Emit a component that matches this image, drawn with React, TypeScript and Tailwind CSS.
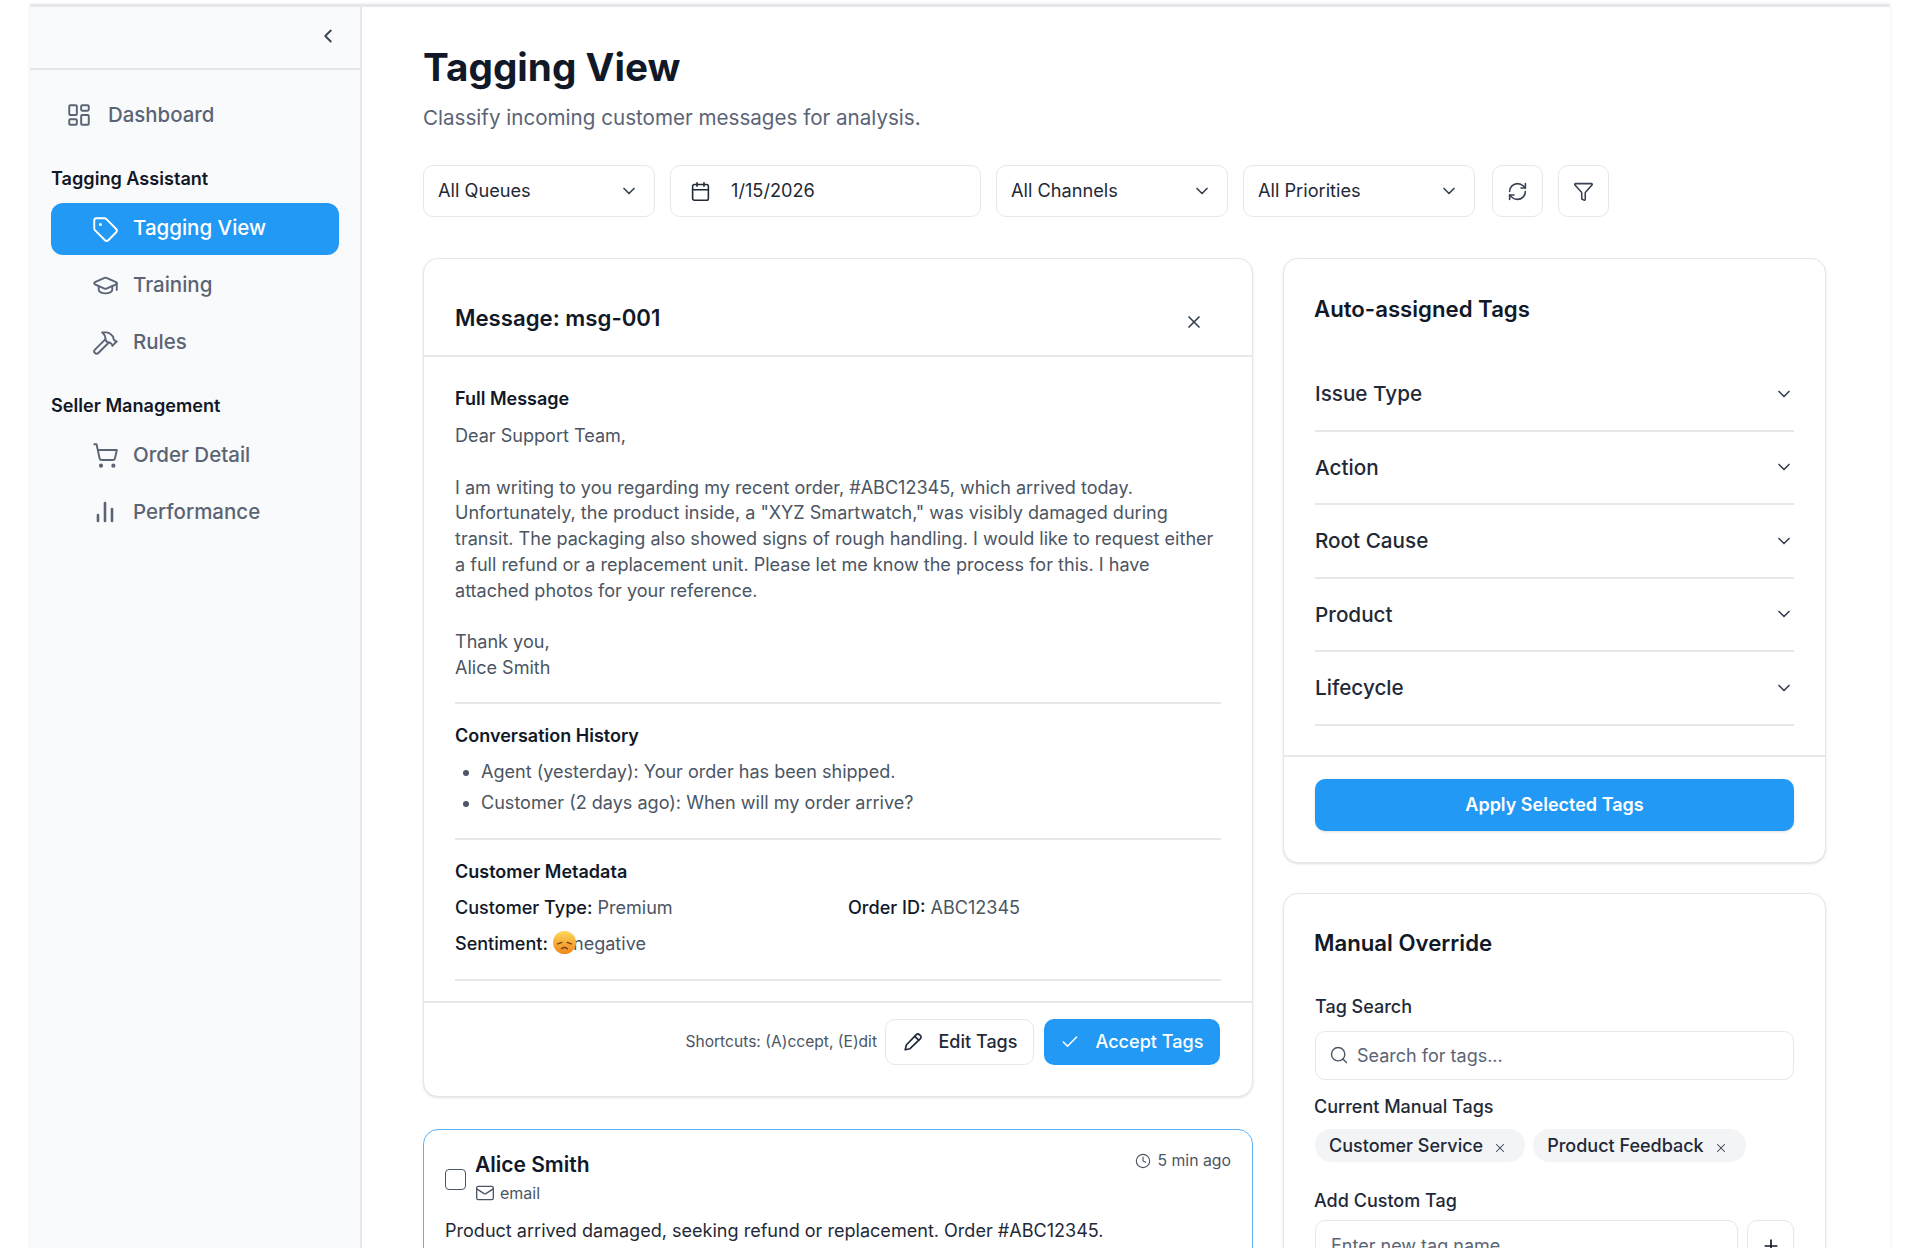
import {
  Calendar,
  Check,
  ChevronDown,
  ChevronLeft,
  ChartNoAxesColumn,
  Clock,
  Filter,
  GraduationCap,
  Hammer,
  LayoutDashboard,
  Mail,
  Plus,
  RefreshCw,
  Search,
  ShoppingCart,
  Tag,
  X,
} from "lucide-react";

const TAG_GROUPS = ["Issue Type", "Action", "Root Cause", "Product", "Lifecycle"];

function NavItem({ icon: Icon, label, active, iconSize = 27 }: { icon: typeof Tag; label: string; active?: boolean; iconSize?: number }) {
  return (
    <div
      className={
        active
          ? "flex h-[52px] items-center rounded-[12px] bg-[#2299f5] pl-[41px] text-[20.5px] font-medium text-white"
          : "flex h-[52px] items-center rounded-[12px] pl-[41px] text-[20.5px] font-medium text-[#5b6475]"
      }
    >
      <span className="flex w-[41px] items-center">
        <Icon size={iconSize} strokeWidth={iconSize < 27 ? 2.6 : 1.7} className={iconSize < 27 ? "ml-[1px]" : ""} />
      </span>
      <span className={active ? "-mt-[2px]" : ""}>{label}</span>
    </div>
  );
}

function FilterSelect({ label }: { label: string }) {
  return (
    <button className="flex h-[52px] w-[232px] items-center justify-between rounded-[10px] border border-[#e5e7eb] bg-white pl-[14px] pr-[15px] text-[18.2px] text-[#1f2937]">
      <span>{label}</span>
      <ChevronDown size={20} strokeWidth={2} className="text-[#374151]" />
    </button>
  );
}

// disappointed face, there is no emoji font on the box
function SadFace() {
  return (
    <svg viewBox="0 0 24 24" className="relative z-10 -mr-[3px] inline-block h-[23px] w-[23px] align-[-4px]">
      <defs>
        <linearGradient id="sad-face" x1="0" y1="0" x2="0" y2="1">
          <stop offset="0" stopColor="#fdd85a" />
          <stop offset="1" stopColor="#f0861c" />
        </linearGradient>
      </defs>
      <circle cx="12" cy="12" r="12" fill="url(#sad-face)" />
      <path d="M5 13.5l4.2-1.6M19 13.5l-4.2-1.6" stroke="#7a3f10" strokeWidth="1.5" fill="none" strokeLinecap="round" />
      <path d="M9 18.5c1.8-1.5 4.2-1.5 6 0" stroke="#7a3f10" strokeWidth="1.5" fill="none" strokeLinecap="round" />
    </svg>
  );
}

function SlimPencil() {
  return (
    <svg viewBox="0 0 24 24" width="22" height="22" fill="none" stroke="currentColor" strokeWidth="1.8" strokeLinecap="round" strokeLinejoin="round">
      <path d="M3.5 20.5l1.2-5.2L15.6 3.9a2.3 2.3 0 0 1 3.3 0l1.2 1.2a2.3 2.3 0 0 1 0 3.3L8.7 19.3z" />
      <path d="M14 5.8l4.2 4.2" />
    </svg>
  );
}

function Chip({ label }: { label: string }) {
  return (
    <span className="flex h-[33px] items-center gap-[10px] rounded-full bg-[#f3f4f6] pl-[14px] pr-[18px] text-[18px] font-medium text-[#1f2937]">
      {label}
      <X size={14} strokeWidth={1.8} className="mt-[5px] text-[#374151]" />
    </span>
  );
}

export default function App() {
  return (
    <div className="h-[1248px] overflow-hidden bg-white font-['Inter',sans-serif] text-[#111827]">
      <div className="mx-[30px] mt-[4px] flex h-[1244px] border-t-[3px] border-[#e5e7eb] shadow-[0_0_4px_rgba(0,0,0,0.08)]">
        {/* Sidebar */}
        <aside className="w-[332px] shrink-0 border-r-2 border-[#e5e7eb] bg-[#f9fafb]">
          <div className="flex h-[63px] items-start justify-end border-b-2 border-[#e5e7eb] pr-[21px] pt-[18px]">
            <ChevronLeft size={22} strokeWidth={2} className="text-[#374151]" />
          </div>
          <div className="px-[21px]">
            <div className="mt-[19px] flex h-[52px] items-center gap-[16px] pl-[15px] text-[20.4px] font-medium text-[#5b6475]">
              <LayoutDashboard size={26} strokeWidth={1.8} />
              <span>Dashboard</span>
            </div>
            <div className="mt-[25px] text-[18.1px] font-semibold leading-[24px] text-[#111827]">Tagging Assistant</div>
            <div className="mt-[13px] flex flex-col gap-[4.5px]">
              <NavItem icon={Tag} label="Tagging View" active />
              <NavItem icon={GraduationCap} label="Training" />
              <NavItem icon={Hammer} label="Rules" />
            </div>
            <div className="mt-[25px] text-[18.1px] font-semibold leading-[24px] text-[#111827]">Seller Management</div>
            <div className="mt-[12px] flex flex-col gap-[5px]">
              <NavItem icon={ShoppingCart} label="Order Detail" />
              <NavItem icon={ChartNoAxesColumn} label="Performance" iconSize={24} />
            </div>
          </div>
        </aside>

        {/* Main */}
        <main className="min-w-0 flex-1 pl-[61px] pr-[64px] pt-[37px]">
          <h1 className="text-[38.7px] font-bold leading-[46px] text-[#111827]">Tagging View</h1>
          <p className="mt-[14px] text-[20.6px] leading-[28px] text-[#5b6475]">Classify incoming customer messages for analysis.</p>

          <div className="mt-[33px] flex items-center gap-[15px]">
            <FilterSelect label="All Queues" />
            <div className="flex h-[52px] w-[311px] items-center gap-[20px] rounded-[10px] border border-[#e5e7eb] bg-white pl-[19px] text-[18.2px] text-[#1f2937]">
              <Calendar size={21} strokeWidth={1.8} />
              <span>1/15/2026</span>
            </div>
            <FilterSelect label="All Channels" />
            <FilterSelect label="All Priorities" />
            <button className="ml-[2px] flex h-[52px] w-[51px] items-center justify-center rounded-[10px] border border-[#e5e7eb] bg-white text-[#374151]">
              <RefreshCw size={21} strokeWidth={1.8} />
            </button>
            <button className="flex h-[52px] w-[51px] items-center justify-center rounded-[10px] border border-[#e5e7eb] bg-white text-[#374151]">
              <Filter size={21} strokeWidth={1.8} />
            </button>
          </div>

          <div className="mt-[41px] grid grid-cols-[830px_543px] gap-[30px]">
            {/* Left column */}
            <div>
              <section className="rounded-[15px] border border-[#e5e7eb] bg-white shadow-sm">
                <div className="flex h-[98px] items-start justify-between border-b-2 border-[#e5e7eb] px-[31px] pt-[41px]">
                  <h2 className="text-[22.2px] font-semibold leading-[36px] text-[#111827]">Message: msg-001</h2>
                  <X size={20} strokeWidth={2} className="mr-[17px] mt-[12px] text-[#374151]" />
                </div>
                <div className="px-[31px] pt-[30px]">
                  <h3 className="text-[18px] font-semibold leading-[24px]">Full Message</h3>
                  <p className="mt-[12px] whitespace-pre-line border-b-2 border-[#e5e7eb] pb-[21px] text-[18.06px] leading-[25.75px] text-[#4b5563]">
                    {`Dear Support Team,

I am writing to you regarding my recent order, #ABC12345, which arrived today.
Unfortunately, the product inside, a "XYZ Smartwatch," was visibly damaged during
transit. The packaging also showed signs of rough handling. I would like to request either
a full refund or a replacement unit. Please let me know the process for this. I have
attached photos for your reference.

Thank you,
Alice Smith`}
                  </p>
                  <h3 className="mt-[20px] text-[18px] font-semibold leading-[24px]">Conversation History</h3>
                  <ul className="mt-[11px] flex list-disc flex-col gap-[5px] border-b-2 border-[#e5e7eb] pb-[22px] pl-[26px] text-[18.06px] leading-[26px] text-[#4b5563]">
                    <li>Agent (yesterday): Your order has been shipped.</li>
                    <li>Customer (2 days ago): When will my order arrive?</li>
                  </ul>
                  <h3 className="mt-[20px] text-[18px] font-semibold leading-[24px]">Customer Metadata</h3>
                  <div className="mt-[11px] grid grid-cols-[393px_1fr] gap-y-[10px] border-b-2 border-[#e5e7eb] pb-[22px] text-[18.06px] leading-[26px] text-[#4b5563]">
                    <div>
                      <span className="font-medium text-[#111827]">Customer Type:</span> Premium
                    </div>
                    <div>
                      <span className="font-medium text-[#111827]">Order ID:</span> ABC12345
                    </div>
                    <div>
                      <span className="font-medium text-[#111827]">Sentiment:</span> <SadFace />negative
                    </div>
                  </div>
                </div>
                <div className="mt-[20px] flex items-center justify-end border-t-2 border-[#e5e7eb] px-[32px] pb-[31px] pt-[16px]">
                  <span className="mr-[8px] text-[15.6px] text-[#4b5563]">Shortcuts: (A)ccept, (E)dit</span>
                  <button className="mr-[10px] flex h-[46px] w-[149px] items-center justify-center gap-[15px] rounded-[10px] border border-[#e5e7eb] bg-white text-[18px] font-medium text-[#1f2937]">
                    <SlimPencil />
                    Edit Tags
                  </button>
                  <button className="flex h-[46px] w-[176px] items-center justify-center gap-[15px] rounded-[10px] bg-[#2299f5] text-[18.1px] font-medium text-white">
                    <Check size={20} strokeWidth={1.8} />
                    Accept Tags
                  </button>
                </div>
              </section>

              <section className="mt-[32px] h-[200px] rounded-[15px] border border-[#5ab2f5] bg-white px-[21px] pt-[21px]">
                <div className="flex items-start justify-between">
                  <div className="flex items-center gap-[9px]">
                    <span className="mt-[4px] h-[21px] w-[21px] rounded-[4px] border-[1.5px] border-[#4b5563]" />
                    <div>
                      <div className="text-[21px] font-semibold leading-[28px]">Alice Smith</div>
                      <div className="mt-[2px] flex items-center gap-[5px] text-[16px] leading-[24px] text-[#4b5563]">
                        <Mail size={20} strokeWidth={1.6} />
                        email
                      </div>
                    </div>
                  </div>
                  <div className="-mt-[2px] flex items-center gap-[6px] text-[15.8px] leading-[24px] text-[#4b5563]">
                    <Clock size={16} strokeWidth={1.7} />5 min ago
                  </div>
                </div>
                <p className="mt-[13px] text-[18.06px] leading-[26px] text-[#1f2937]">Product arrived damaged, seeking refund or replacement. Order #ABC12345.</p>
              </section>
            </div>

            {/* Right column */}
            <div>
              <section className="rounded-[15px] border border-[#e5e7eb] bg-white shadow-sm">
                <div className="px-[31px] pt-[34px]">
                  <h2 className="-ml-[1px] text-[22.2px] font-semibold leading-[32px] text-[#111827]">Auto-assigned Tags</h2>
                  <div className="mt-[33px]">
                    {TAG_GROUPS.map((group) => (
                      <div key={group} className="flex h-[73.5px] items-center justify-between border-b-2 border-[#e5e7eb] text-[20.7px] font-medium text-[#1f2937]">
                        <span>{group}</span>
                        <ChevronDown size={20} strokeWidth={2} className="text-[#374151]" />
                      </div>
                    ))}
                  </div>
                </div>
                <div className="mt-[29px] border-t-2 border-[#e5e7eb] px-[31px] pb-[31px] pt-[22px]">
                  <button className="h-[52px] w-full rounded-[10px] bg-[#2299f5] text-[18px] font-semibold text-white shadow-sm">Apply Selected Tags</button>
                </div>
              </section>

              <section className="mt-[30px] h-[400px] rounded-[15px] border border-[#e5e7eb] bg-white px-[31px] pt-[33px] shadow-sm">
                <h2 className="-ml-[1px] text-[22.2px] font-semibold leading-[32px] text-[#111827]">Manual Override</h2>
                <label className="mt-[36px] block text-[18px] font-medium leading-[24px] text-[#1f2937]">Tag Search</label>
                <div className="mt-[12px] flex h-[49px] items-center gap-[8px] rounded-[10px] border border-[#e5e7eb] pl-[13px]">
                  <Search size={20} strokeWidth={1.7} className="text-[#4b5563]" />
                  <input placeholder="Search for tags..." className="min-w-0 flex-1 bg-transparent text-[18px] outline-none placeholder:text-[#5b6475]" />
                </div>
                <div className="-ml-[1px] mt-[15px] text-[18px] font-medium leading-[24px] text-[#1f2937]">Current Manual Tags</div>
                <div className="mt-[10px] flex gap-[8px]">
                  <Chip label="Customer Service" />
                  <Chip label="Product Feedback" />
                </div>
                <div className="-ml-[1px] mt-[27px] text-[18px] font-medium leading-[24px] text-[#1f2937]">Add Custom Tag</div>
                <div className="mt-[7px] flex gap-[9px]">
                  <input placeholder="Enter new tag name" className="h-[52px] min-w-0 flex-1 rounded-[10px] border border-[#e5e7eb] px-[15px] text-[18px] outline-none placeholder:text-[#5b6475]" />
                  <button className="flex h-[52px] w-[47px] items-center justify-center rounded-[10px] border border-[#e5e7eb]">
                    <Plus size={20} strokeWidth={2} />
                  </button>
                </div>
              </section>
            </div>
          </div>
        </main>
      </div>
    </div>
  );
}
